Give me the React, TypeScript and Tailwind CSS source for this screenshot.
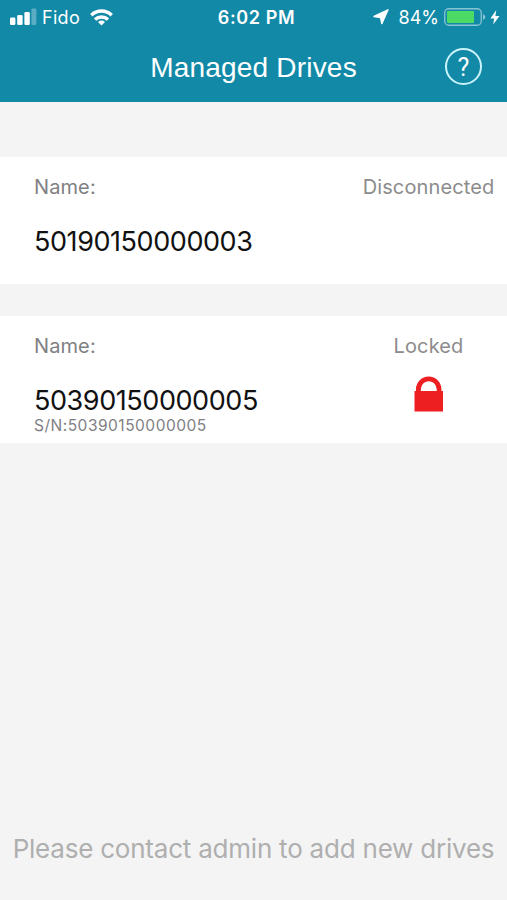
import React from "react";

type Drive = {
  name: string;
  serial?: string;
  status: string;
  locked?: boolean;
};

const drives: Drive[] = [
  { name: "50190150000003", status: "Disconnected" },
  { name: "50390150000005", serial: "50390150000005", status: "Locked", locked: true },
];

function SignalIcon() {
  return (
    <svg className="w-[27px] h-[18px]" viewBox="0 0 27 18" fill="white">
      <rect x="0" y="9.5" width="5.4" height="7.5" rx="1.3" />
      <rect x="7.2" y="7" width="5.4" height="10" rx="1.3" />
      <rect x="14.4" y="4" width="5.4" height="13" rx="1.3" />
      <rect x="21.4" y="0.5" width="5" height="16.5" rx="1.3" opacity="0.3" />
    </svg>
  );
}

function WifiIcon() {
  return (
    <svg className="w-[23px] h-[17px]" viewBox="0 0 23 17" fill="none" stroke="white" strokeWidth="3.4">
      <path d="M1.3 6.2a14.6 14.6 0 0 1 20.4 0" />
      <path d="M5 10.6a9.4 9.4 0 0 1 13 0" />
      <path d="M11.5 16.6l-3.5-3.6a5 5 0 0 1 7 0z" fill="white" stroke="none" />
    </svg>
  );
}

function LocationIcon() {
  return (
    <svg className="w-[16px] h-[16px]" viewBox="0 0 16 16" fill="white">
      <path
        d="M15 0.8 L8.8 14.6 L7.6 8.5 L1 7.5 Z"
        stroke="white"
        strokeWidth="1.4"
        strokeLinejoin="round"
      />
    </svg>
  );
}

function BatteryIcon() {
  return (
    <svg className="w-[42px] h-[18px]" viewBox="0 0 42 18" fill="none">
      <rect x="0.75" y="0.75" width="36.5" height="16.5" rx="4" stroke="white" strokeOpacity="0.5" strokeWidth="1.3" />
      <rect x="3" y="3" width="27" height="12" rx="1" fill="#4cd964" />
      <path d="M39 6.2c3 1 3 4.6 0 5.6z" fill="white" fillOpacity="0.5" />
    </svg>
  );
}

function BoltIcon() {
  return (
    <svg className="w-[10px] h-[15px]" viewBox="0 0 10 15" fill="white">
      <path d="M6.3 0 L0.4 8.4 H4.2 L3.2 14.6 L9.5 5.9 H5.4 Z" />
    </svg>
  );
}

function LockIcon() {
  return (
    <svg className="w-[30px] h-[36px]" viewBox="0 0 30 36" fill="#ee1f21">
      <path
        fillRule="evenodd"
        d="M0.5 15 H2 V13 a12.7 12.5 0 0 1 25.4 0 V15 H29 V35.6 H0.5 Z M6.8 15 H22.8 C22.8 9 19.5 5.3 14.8 5.3 C10.1 5.3 6.8 9 6.8 15 Z"
      />
    </svg>
  );
}

function StatusBar() {
  return (
    <div className="grid grid-cols-[1fr_auto_1fr] items-center h-[34px] pl-[10px] pr-[7px] text-[18px] text-white">
      <div className="flex items-center">
        <SignalIcon />
        <span className="ml-[5px] mr-[10px] tracking-[0.3px]">Fido</span>
        <WifiIcon />
      </div>
      <span className="pl-[3px] font-semibold tracking-[0.6px]">6:02 PM</span>
      <div className="flex items-center justify-end">
        <LocationIcon />
        <span className="ml-[10px] mr-[5px]">84%</span>
        <BatteryIcon />
        <span className="ml-[4px]">
          <BoltIcon />
        </span>
      </div>
    </div>
  );
}

function Header() {
  return (
    <header className="h-[102px] bg-[#1289a7]">
      <StatusBar />
      <div className="grid grid-cols-[1fr_auto_1fr] items-center h-[65px] px-[25px] text-white">
        <span />
        <h1 className="pt-[2px] font-['Liberation_Sans',Arial,sans-serif] text-[28px] leading-[32px] tracking-[0.2px]">
          Managed Drives
        </h1>
        <button className="justify-self-end flex items-center justify-center w-[37px] h-[37px] pt-[2px] rounded-full border-2 border-[#c9f3fa] font-['Roboto',sans-serif] text-[25px]">
          ?
        </button>
      </div>
    </header>
  );
}

function DriveCard({ drive }: { drive: Drive }) {
  return (
    <div className="flex justify-between bg-white h-[127px] pl-[34px] pt-[16px]">
      <div className="flex flex-col">
        <span className="text-[20px] leading-[28px] text-[#808084] tracking-[0.1px]">Name:</span>
        <span className="mt-[23px] text-[27px] leading-[36px] text-[#111] tracking-[-0.43px]">{drive.name}</span>
        {drive.serial && (
          <span className="text-[15.5px] leading-[14px] text-[#808084] tracking-[0.5px]">S/N:{drive.serial}</span>
        )}
      </div>
      <div className="flex flex-col items-center w-[157px]">
        <span className="text-[20px] leading-[28px] text-[#8c8c8c] tracking-[0.12px]">{drive.status}</span>
        {drive.locked && (
          <span className="mt-[16px]">
            <LockIcon />
          </span>
        )}
      </div>
    </div>
  );
}

function App() {
  return (
    <div className="flex flex-col h-[900px] w-[507px] bg-[#f4f4f4] font-['Inter','Liberation_Sans',sans-serif]">
      <Header />
      <main className="flex flex-col gap-[32px] pt-[55px]">
        {drives.map((drive) => (
          <DriveCard key={drive.name} drive={drive} />
        ))}
      </main>
      <p className="mt-auto mb-[33px] text-center whitespace-nowrap text-[26px] leading-[36px] text-[#afafaf] tracking-[-0.22px]">
        Please contact admin to add new drives
      </p>
    </div>
  );
}

export default App;
